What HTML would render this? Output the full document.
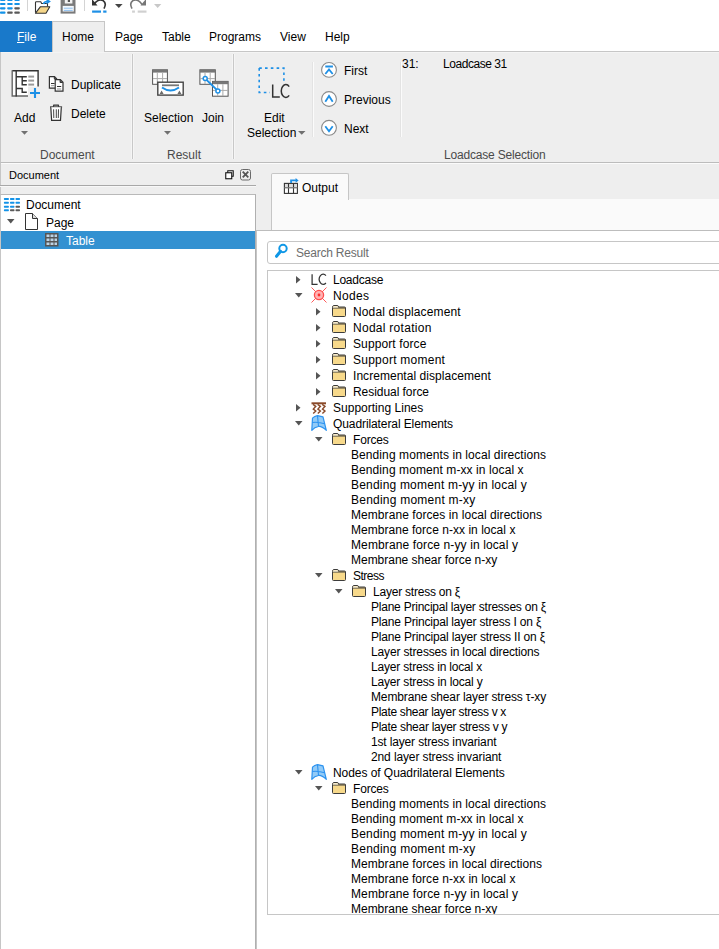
<!DOCTYPE html>
<html><head><meta charset="utf-8">
<style>
*{margin:0;padding:0;box-sizing:border-box}
html,body{width:719px;height:949px;overflow:hidden;background:#fff;font-family:"Liberation Sans",sans-serif;font-size:12px;color:#000}
.a{position:absolute}
.t{position:absolute;white-space:nowrap;line-height:16px;height:16px}
svg{position:absolute;overflow:visible}
.lc{position:absolute;font-size:15px;line-height:16px;color:#333;transform:scaleX(0.95)}
.ic{position:absolute}
</style></head><body>
<!-- QAT icons -->
<svg style="left:0;top:0" width="20" height="14"><rect x="0" y="-1.3" width="5.5" height="2.2" rx="0.8" fill="#1493e8"/><rect x="7.2" y="-1.3" width="5.5" height="2.2" rx="0.8" fill="#1493e8"/><rect x="14.3" y="-1.3" width="5.5" height="2.2" rx="0.8" fill="#1493e8"/><rect x="0" y="2.9" width="5.5" height="2.2" rx="0.8" fill="#1493e8"/><rect x="7.2" y="2.9" width="5.5" height="2.2" rx="0.8" fill="#1493e8"/><rect x="14.3" y="2.9" width="5.5" height="2.2" rx="0.8" fill="#1493e8"/><rect x="0" y="7.2" width="5.5" height="2.2" rx="0.8" fill="#1493e8"/><rect x="7.2" y="7.2" width="5.5" height="2.2" rx="0.8" fill="#1493e8"/><rect x="14.3" y="7.2" width="5.5" height="2.2" rx="0.8" fill="#5a5a5a"/><rect x="0" y="11.5" width="5.5" height="2.2" rx="0.8" fill="#1493e8"/><rect x="7.2" y="11.5" width="5.5" height="2.2" rx="0.8" fill="#5a5a5a"/><rect x="14.3" y="11.5" width="5.5" height="2.2" rx="0.8" fill="#5a5a5a"/></svg>
<div class="a" style="left:27px;top:0;width:1px;height:11px;background:#d4d4d4"></div>
<svg style="left:30px;top:0" width="24" height="16">
 <path d="M5.5 12.5 L5.5 2.5 Q5.5 1.7 6.3 1.7 L10.8 1.7 L11.6 3.5 L17.5 3.5 L17.5 6.5" fill="none" stroke="#333" stroke-width="1.1"/>
 <path d="M5.5 13.2 L10.5 6.7 L19.8 6.7 L16 13.2 Z" fill="#f5d68a" stroke="#333" stroke-width="1.1" stroke-linejoin="round"/>
 <path d="M13.5 4 Q14 1.5 17.5 1.5" fill="none" stroke="#1e90e6" stroke-width="1.6"/>
 <path d="M16.5 -1.5 L20.9 1.5 L16.5 4.2 Z" fill="#1e90e6"/>
</svg>
<svg style="left:60px;top:0" width="16" height="14">
 <path d="M0.6 -1 L0.6 13.6 L15.5 13.6 L15.5 -1 Z" fill="#7a7a7a"/>
 <rect x="4.8" y="-1" width="7.6" height="4.5" fill="#f2f2f2"/><rect x="7.8" y="-1" width="2.2" height="3" fill="#555"/>
 <rect x="2.7" y="5.9" width="11.1" height="5.6" fill="#f4f8fc"/>
 <line x1="3.8" y1="8.2" x2="12.7" y2="8.2" stroke="#8ec0f0" stroke-width="1"/><line x1="3.8" y1="10.4" x2="12.7" y2="10.4" stroke="#8ec0f0" stroke-width="1"/>
</svg>
<div class="a" style="left:84px;top:0;width:1px;height:11px;background:#d4d4d4"></div>
<svg style="left:86px;top:0" width="24" height="14">
 <path d="M8 4.5 Q12 -1.5 17 0.5 Q21 3 18 8.6" fill="none" stroke="#333" stroke-width="1.6"/>
 <path d="M6 -1 L6 5.5 L11.5 5.5 Z" fill="#333"/>
 <line x1="6.1" y1="11.6" x2="15" y2="11.6" stroke="#1e90e6" stroke-width="2.2"/><line x1="17.2" y1="11.6" x2="20.5" y2="11.6" stroke="#1e90e6" stroke-width="2.2"/>
</svg>
<svg style="left:115px;top:4px" width="8" height="5"><path d="M0 0 L7.6 0 L3.8 3.9 Z" fill="#444"/></svg>
<svg style="left:126px;top:0" width="24" height="14">
 <path d="M16 4.5 Q12 -1.5 7 0.5 Q3 3 6 8.6" fill="none" stroke="#777" stroke-width="1.6"/>
 <path d="M20 -1 L20 5.5 L14.5 5.5 Z" fill="#777"/>
 <line x1="6.1" y1="11.6" x2="8.9" y2="11.6" stroke="#d0d0d0" stroke-width="2.2"/><line x1="11.7" y1="11.6" x2="20.5" y2="11.6" stroke="#d0d0d0" stroke-width="2.2"/>
</svg>
<svg style="left:154px;top:4px" width="8" height="5"><path d="M0 0 L7.3 0 L3.65 3.9 Z" fill="#c8c8c8"/></svg>
<!-- tabs -->
<div class="a" style="left:0;top:21px;width:52px;height:31px;background:#1979ca;z-index:2"></div>
<div class="t" style="left:17px;top:29px;color:#fff;z-index:3"><u>F</u>ile</div>
<div class="a" style="left:52px;top:21px;width:53px;height:31px;background:#eeeeee;border:1px solid #c6c6c6;border-bottom:none;z-index:2"></div>
<div class="t" style="left:62px;top:29px;z-index:3">Home</div>
<div class="t" style="left:115px;top:29px">Page</div>
<div class="t" style="left:162px;top:29px">Table</div>
<div class="t" style="left:209px;top:29px">Programs</div>
<div class="t" style="left:280px;top:29px">View</div>
<div class="t" style="left:325px;top:29px">Help</div>
<!-- ribbon body -->
<div class="a" style="left:0;top:51px;width:719px;height:112px;background:#eeeeee;border-top:1px solid #c6c6c6;border-bottom:1px solid #bcbcbc;border-left:1px solid #c6c6c6"></div>
<div class="a" style="left:1px;top:52px;width:718px;height:1px;background:#f4f4f4;z-index:1"></div>
<!-- Document group -->
<svg style="left:8px;top:66px" width="36" height="36">
 <path d="M4.2 4.7 L30.1 4.7 L30.1 20.5 L20 20.5 L20 30 L4.2 30 Z" fill="#fff"/>
 <g fill="none" stroke="#333" stroke-width="1.4">
 <path d="M4.2 4.7 L30.1 4.7 L30.1 20.5" />
 <path d="M4.2 4.2 L4.2 30 L20 30" stroke="#666"/>
 <line x1="8.2" y1="4.2" x2="8.2" y2="30.5"/>
 <path d="M8.2 10.8 L18.8 10.8 M14.2 10.8 L14.2 18.8 L18.8 18.8 M14.2 14.8 L18.8 14.8 M8.2 22.5 L14.2 22.5 L14.2 26.3 L18.8 26.3"/>
 </g>
 <g fill="#9a9a9a"><rect x="20.3" y="9.6" width="5.8" height="2"/><rect x="20.3" y="13.6" width="5.8" height="2"/><rect x="20.3" y="17.6" width="5.8" height="2"/></g>
 <path d="M27 22 L27 32 M22 27 L32 27" stroke="#1e90e6" stroke-width="2.1"/>
</svg>
<div class="t" style="left:14px;top:110px">Add</div>
<svg style="left:21px;top:131px" width="8" height="5"><path d="M0 0 L7 0 L3.5 3.8 Z" fill="#707070"/></svg>
<svg style="left:44px;top:72px" width="24" height="24">
 <g stroke="#333" stroke-width="1.2" fill="#fff">
 <path d="M5.4 4.6 L10.5 4.6 L12.6 6.7 L12.6 16.2 L5.4 16.2 Z"/>
 <path d="M11.2 7.6 L16.3 7.6 L19 10.3 L19 19.2 L11.2 19.2 Z"/>
 </g>
 <path d="M10.3 4.8 L10.3 6.9 L12.4 6.9 M16.1 7.8 L16.1 10.5 L18.8 10.5" fill="#555" stroke="#333" stroke-width="1"/>
 <line x1="7" y1="11.5" x2="10.6" y2="11.5" stroke="#333" stroke-width="1"/><line x1="7" y1="13.7" x2="10.6" y2="13.7" stroke="#999" stroke-width="1"/>
 <line x1="13" y1="14.5" x2="17.2" y2="14.5" stroke="#333" stroke-width="1"/><line x1="13" y1="17" x2="17.2" y2="17" stroke="#999" stroke-width="1"/>
</svg>
<div class="t" style="left:71px;top:77px">Duplicate</div>
<svg style="left:44px;top:100px" width="24" height="24">
 <path d="M6 7 L18.1 7" stroke="#333" stroke-width="1.3"/>
 <path d="M9.3 6.8 L9.8 5.2 L14.3 5.2 L14.8 6.8" fill="none" stroke="#333" stroke-width="1.2"/>
 <path d="M6.8 7.2 L7.6 20.3 L16.5 20.3 L17.3 7.2" fill="#fff" stroke="#333" stroke-width="1.2"/>
 <path d="M9.6 9.3 L9.8 18 M12.3 9.3 L12.3 18 M14.5 9.3 L14.3 18" stroke="#333" stroke-width="0.9"/>
</svg>
<div class="t" style="left:71px;top:106px">Delete</div>
<div class="t" style="left:40px;top:147px;color:#4a4a4a">Document</div>
<div class="a" style="left:131px;top:54px;width:3px;height:105px;background:#f5f5f5"></div><div class="a" style="left:132px;top:54px;width:1px;height:105px;background:#c8c8c8"></div>
<!-- Result group -->
<svg style="left:148px;top:64px" width="84" height="36">
 <rect x="4.6" y="5.8" width="14.8" height="14.5" fill="#fff" stroke="#555" stroke-width="1"/>
 <rect x="4.6" y="5.8" width="14.8" height="2.8" fill="#777"/>
 <path d="M9.3 8.6 L9.3 20 M14.6 8.6 L14.6 20 M5 14.6 L19 14.6" stroke="#aaa" stroke-width="1"/>
 <rect x="9.8" y="18.2" width="25.4" height="12.9" fill="#fff" stroke="#444" stroke-width="1.4"/>
 <rect x="14" y="20.4" width="17" height="1.8" fill="#777"/>
 <path d="M14 23.5 Q22.5 29.5 31 23.5" fill="none" stroke="#1e90e6" stroke-width="2"/>
 <path d="M11.6 30 L13.6 26.4 L15.6 30 Z M29.4 30 L31.4 26.4 L33.4 30 Z" fill="#6a6a6a"/>
 <!-- join -->
 <rect x="51.9" y="5.8" width="15.4" height="14.5" fill="#fff" stroke="#555" stroke-width="1"/>
 <rect x="51.9" y="5.8" width="15.4" height="2.8" fill="#777"/>
 <path d="M57 8.6 L57 20 M62.2 8.6 L62.2 20 M52 14.6 L67 14.6" stroke="#aaa" stroke-width="1"/>
 <rect x="64.5" y="17.4" width="15.6" height="14.8" fill="#fff" stroke="#555" stroke-width="1"/>
 <rect x="64.5" y="17.4" width="15.6" height="2.8" fill="#777"/>
 <path d="M69.7 20.2 L69.7 32 M74.9 20.2 L74.9 32 M65 26.4 L80 26.4" stroke="#aaa" stroke-width="1"/>
 <line x1="57.2" y1="14.6" x2="69.9" y2="26.9" stroke="#1e90e6" stroke-width="2"/>
 <circle cx="57.2" cy="14.6" r="2" fill="#fff" stroke="#1e90e6" stroke-width="1.5"/>
 <circle cx="69.9" cy="26.9" r="2" fill="#fff" stroke="#1e90e6" stroke-width="1.5"/>
</svg>
<div class="t" style="left:144px;top:110px">Selection</div>
<svg style="left:164px;top:131px" width="8" height="5"><path d="M0 0 L7 0 L3.5 3.8 Z" fill="#707070"/></svg>
<div class="t" style="left:202px;top:110px">Join</div>
<div class="t" style="left:167px;top:147px;color:#4a4a4a">Result</div>
<div class="a" style="left:232px;top:54px;width:3px;height:105px;background:#f5f5f5"></div><div class="a" style="left:233px;top:54px;width:1px;height:105px;background:#c8c8c8"></div>
<!-- Edit selection -->
<svg style="left:254px;top:62px" width="40" height="40">
 <path d="M5.2 6.1 L29.9 6.1 L29.9 20 M5.2 6.1 L5.2 30.5 L16 30.5" fill="none" stroke="#1e90e6" stroke-width="1.6" stroke-dasharray="2.6 3.2"/>
 <path d="M18.7 22.4 L18.7 34.9 L25.8 34.9" fill="none" stroke="#333" stroke-width="1.5"/>
 <path d="M35.2 24.6 A4.6 6.4 0 1 0 35.2 33.4" fill="none" stroke="#333" stroke-width="1.5"/>
</svg>
<div class="t" style="left:264px;top:110px">Edit</div>
<div class="t" style="left:247px;top:125px">Selection</div>
<svg style="left:298px;top:131px" width="8" height="5"><path d="M0 0 L7.5 0 L3.75 3.8 Z" fill="#707070"/></svg>
<div class="a" style="left:312px;top:62px;width:1px;height:75px;background:#e3e3e3"></div><div class="a" style="left:313px;top:62px;width:1px;height:75px;background:#fbfbfb"></div>
<svg style="left:318px;top:58px" width="24" height="82">
 <g fill="#fff" stroke="#8a8a8a" stroke-width="1.1">
 <circle cx="11" cy="11.9" r="7.4"/><circle cx="11" cy="41" r="7.4"/><circle cx="11" cy="69.8" r="7.4"/>
 </g>
 <g fill="none" stroke="#1e90e6" stroke-width="1.8">
 <path d="M7.3 8.5 L14.9 8.5 M7.3 16 L11 11.4 L14.7 16"/>
 <path d="M7.3 43.7 L11 37.9 L14.7 43.7"/>
 <path d="M7.3 68.2 L11 73.2 L14.7 68.2"/>
 </g>
</svg>
<div class="t" style="left:344px;top:63px">First</div>
<div class="t" style="left:344px;top:92px">Previous</div>
<div class="t" style="left:344px;top:121px">Next</div>
<div class="a" style="left:400px;top:62px;width:1px;height:75px;background:#e3e3e3"></div><div class="a" style="left:401px;top:62px;width:1px;height:75px;background:#fbfbfb"></div>
<div class="t" style="left:402px;top:56px">31:</div>
<div class="t" style="left:443px;top:56px;letter-spacing:-0.45px">Loadcase 31</div>
<div class="t" style="left:444px;top:147px;color:#4a4a4a;letter-spacing:-0.18px">Loadcase Selection</div>
<!-- lower area -->
<div class="a" style="left:0;top:163px;width:719px;height:786px;background:#eeeeee"></div>
<div class="a" style="left:0;top:163px;width:719px;height:1px;background:#fbfbfb"></div>
<div class="a" style="left:0;top:163px;width:1px;height:786px;background:#c6c6c6"></div>
<!-- left panel -->
<div class="t" style="left:9px;top:167px;font-size:11px">Document</div>
<svg style="left:220px;top:164px" width="36" height="22">
 <rect x="7.75" y="6.75" width="5.5" height="5.5" fill="none" stroke="#111" stroke-width="1"/>
 <rect x="5.75" y="8.75" width="6" height="6" fill="#fff" stroke="#111" stroke-width="1.1"/>
 <rect x="20.5" y="5.5" width="10" height="10.5" rx="2" fill="none" stroke="#6a6a6a" stroke-width="1"/>
 <path d="M22.7 7.7 L28.3 13.3 M28.3 7.7 L22.7 13.3" stroke="#555" stroke-width="1.8"/>
</svg>
<div class="a" style="left:0;top:185px;width:256px;height:1px;background:#a8a8a8"></div>
<div class="a" style="left:0;top:186px;width:256px;height:1px;background:#f8f8f8"></div>
<div class="a" style="left:0;top:194px;width:256px;height:755px;background:#fff;border-top:1px solid #b9b9b9;border-left:1px solid #c6c6c6;border-right:1px solid #b0b0b0"></div>
<svg style="left:0;top:0" width="24" height="214"><rect x="3.9" y="197.9" width="5.0" height="2" rx="0.7" fill="#1493e8"/><rect x="10.0" y="197.9" width="4.5" height="2" rx="0.7" fill="#1493e8"/><rect x="15.5" y="197.9" width="4.5" height="2" rx="0.7" fill="#1493e8"/><rect x="3.9" y="201.8" width="5.0" height="2" rx="0.7" fill="#1493e8"/><rect x="10.0" y="201.8" width="4.5" height="2" rx="0.7" fill="#1493e8"/><rect x="15.5" y="201.8" width="4.5" height="2" rx="0.7" fill="#1493e8"/><rect x="3.9" y="205.7" width="5.0" height="2" rx="0.7" fill="#1493e8"/><rect x="10.0" y="205.7" width="4.5" height="2" rx="0.7" fill="#1493e8"/><rect x="15.5" y="205.7" width="4.5" height="2" rx="0.7" fill="#5a5a5a"/><rect x="3.9" y="209.2" width="5.0" height="2" rx="0.7" fill="#1493e8"/><rect x="10.0" y="209.2" width="4.5" height="2" rx="0.7" fill="#5a5a5a"/><rect x="15.5" y="209.2" width="4.5" height="2" rx="0.7" fill="#5a5a5a"/></svg>
<div class="t" style="left:26px;top:197px;color:#000">Document</div>
<svg style="left:7px;top:219px" width="8" height="6"><path d="M0 0 L7.5 0 L3.75 4.5 Z" fill="#555"/></svg>
<svg style="left:25px;top:213px" width="14" height="18">
 <path d="M0.5 0.5 L7.5 0.5 L12.5 5.5 L12.5 16.5 L0.5 16.5 Z" fill="#fff" stroke="#333"/>
 <path d="M7.5 0.5 L7.5 5.5 L12.5 5.5" fill="#ddd" stroke="#333"/>
</svg>
<div class="t" style="left:46px;top:215px;color:#000">Page</div>
<div class="a" style="left:1px;top:231px;width:254px;height:18px;background:#3391d1"></div>
<svg style="left:45px;top:233px" width="14" height="14">
 <rect x="0" y="0" width="13.5" height="13.5" fill="#555"/>
 <g fill="#bcd3e6"><rect x="1.5" y="1.5" width="3" height="2.5"/><rect x="5.5" y="1.5" width="3" height="2.5"/><rect x="9.5" y="1.5" width="2.5" height="2.5"/>
 <rect x="1.5" y="5.5" width="3" height="2.5"/><rect x="5.5" y="5.5" width="3" height="2.5"/><rect x="9.5" y="5.5" width="2.5" height="2.5"/>
 <rect x="1.5" y="9.5" width="3" height="2.5"/><rect x="5.5" y="9.5" width="3" height="2.5"/><rect x="9.5" y="9.5" width="2.5" height="2.5"/></g>
</svg>
<div class="t" style="left:66px;top:233px;color:#fff">Table</div>
<!-- right panel -->
<div class="a" style="left:271px;top:173px;width:78px;height:27px;background:#fafafa;border:1px solid #c6c6c6;border-bottom:none;border-radius:2px 2px 0 0;z-index:2"></div>
<div class="a" style="left:348px;top:199px;width:371px;height:1px;background:#c6c6c6"></div>
<div class="a" style="left:271px;top:199px;width:448px;height:32px;background:#fafafa;border-left:1px solid #c6c6c6;z-index:1"></div>
<div class="a" style="left:272px;top:199px;width:76px;height:2px;background:#fafafa;z-index:3"></div>
<div class="a" style="left:256px;top:230px;width:463px;height:1px;background:#bdbdbd;z-index:3"></div>
<svg style="left:280px;top:174px;z-index:4" width="20" height="22">
 <rect x="4.4" y="9.4" width="13" height="10" fill="#fff" stroke="#333" stroke-width="1.1"/>
 <rect x="5" y="10" width="12" height="3.5" fill="#dedede"/>
 <line x1="8.5" y1="9.4" x2="8.5" y2="19.4" stroke="#333" stroke-width="1.1"/><line x1="13.5" y1="9.4" x2="13.5" y2="19.4" stroke="#333" stroke-width="1.1"/>
 <line x1="4.4" y1="13.75" x2="17.4" y2="13.75" stroke="#777" stroke-width="1.3"/>
 <path d="M11.1 9 L11.1 6.4 L16 6.4" fill="none" stroke="#1e90e6" stroke-width="1.9"/>
 <path d="M15.6 4 L18.6 6.4 L15.6 8.8 Z" fill="#1e90e6"/>
</svg>
<div class="t" style="left:302px;top:180px;z-index:4;color:#000">Output</div>
<div class="a" style="left:256px;top:231px;width:463px;height:718px;background:#fff;border-left:1px solid #c6c6c6"></div>
<div class="a" style="left:267px;top:241px;width:460px;height:23px;background:#fff;border:1px solid #c6c6c6;border-radius:3px"></div>
<svg style="left:274px;top:244px" width="15" height="15">
 <circle cx="9" cy="4.5" r="3.7" fill="none" stroke="#0f97e6" stroke-width="2"/>
 <line x1="6.6" y1="7.3" x2="2.5" y2="12.3" stroke="#0f97e6" stroke-width="3" stroke-linecap="round"/>
</svg>
<div class="t" style="left:296px;top:245px;color:#6d6d6d;letter-spacing:-0.22px">Search Result</div>
<div class="a" style="left:267px;top:270px;width:460px;height:645px;background:#fff;border:1px solid #c6c6c6;overflow:hidden" id="tree">
<svg class="ic" style="left:43px;top:0px" width="17" height="17"><path d="M1.1 3.2 L1.1 13.4 L6.6 13.4" fill="none" stroke="#333" stroke-width="1.25"/><path d="M14.9 4.6 A3.9 5.1 0 1 0 14.9 12" fill="none" stroke="#333" stroke-width="1.25"/></svg>
<svg class="ic" style="left:28px;top:5px" width="6" height="8"><path d="M0 0 L4.5 3.75 L0 7.5 Z" fill="#555"/></svg>
<div class="t" style="left:65px;top:1px;letter-spacing:-0.243px">Loadcase</div>
<svg class="ic" style="left:43px;top:16px" width="17" height="17"><path d="M0.5 0.5 L15.5 15.5 M15.5 0.5 L0.5 15.5" stroke="#ff5a5a" stroke-width="1"/><circle cx="8" cy="8" r="4.6" fill="#ffb3b3" stroke="#ff4d4d" stroke-width="1.3"/><circle cx="8" cy="8" r="1.4" fill="#ff3030"/></svg>
<svg class="ic" style="left:27px;top:22px" width="8" height="6"><path d="M0 0 L7.5 0 L3.75 4.5 Z" fill="#555"/></svg>
<div class="t" style="left:65px;top:17px;letter-spacing:0.325px">Nodes</div>
<svg class="ic" style="left:63px;top:32px" width="17" height="17"><path d="M1.5 4.5 Q1.5 2.5 3 2.5 L6 2.5 Q7.5 2.5 7.5 4 L13.5 4 Q14.5 4 14.5 5 L14.5 12.5 Q14.5 13.5 13.5 13.5 L2.5 13.5 Q1.5 13.5 1.5 12.5 Z" fill="#f7d98b" stroke="#3c3c3c" stroke-width="1"/><path d="M1.5 5 L14.5 5" stroke="#3c3c3c" stroke-width="1"/><path d="M2 3.5 L7 3.5 L7 4.5 L2 4.5Z" fill="#fff"/></svg>
<svg class="ic" style="left:48px;top:37px" width="6" height="8"><path d="M0 0 L4.5 3.75 L0 7.5 Z" fill="#555"/></svg>
<div class="t" style="left:85px;top:33px;letter-spacing:0.129px">Nodal displacement</div>
<svg class="ic" style="left:63px;top:48px" width="17" height="17"><path d="M1.5 4.5 Q1.5 2.5 3 2.5 L6 2.5 Q7.5 2.5 7.5 4 L13.5 4 Q14.5 4 14.5 5 L14.5 12.5 Q14.5 13.5 13.5 13.5 L2.5 13.5 Q1.5 13.5 1.5 12.5 Z" fill="#f7d98b" stroke="#3c3c3c" stroke-width="1"/><path d="M1.5 5 L14.5 5" stroke="#3c3c3c" stroke-width="1"/><path d="M2 3.5 L7 3.5 L7 4.5 L2 4.5Z" fill="#fff"/></svg>
<svg class="ic" style="left:48px;top:53px" width="6" height="8"><path d="M0 0 L4.5 3.75 L0 7.5 Z" fill="#555"/></svg>
<div class="t" style="left:85px;top:49px;letter-spacing:0.277px">Nodal rotation</div>
<svg class="ic" style="left:63px;top:64px" width="17" height="17"><path d="M1.5 4.5 Q1.5 2.5 3 2.5 L6 2.5 Q7.5 2.5 7.5 4 L13.5 4 Q14.5 4 14.5 5 L14.5 12.5 Q14.5 13.5 13.5 13.5 L2.5 13.5 Q1.5 13.5 1.5 12.5 Z" fill="#f7d98b" stroke="#3c3c3c" stroke-width="1"/><path d="M1.5 5 L14.5 5" stroke="#3c3c3c" stroke-width="1"/><path d="M2 3.5 L7 3.5 L7 4.5 L2 4.5Z" fill="#fff"/></svg>
<svg class="ic" style="left:48px;top:69px" width="6" height="8"><path d="M0 0 L4.5 3.75 L0 7.5 Z" fill="#555"/></svg>
<div class="t" style="left:85px;top:65px;letter-spacing:0.108px">Support force</div>
<svg class="ic" style="left:63px;top:80px" width="17" height="17"><path d="M1.5 4.5 Q1.5 2.5 3 2.5 L6 2.5 Q7.5 2.5 7.5 4 L13.5 4 Q14.5 4 14.5 5 L14.5 12.5 Q14.5 13.5 13.5 13.5 L2.5 13.5 Q1.5 13.5 1.5 12.5 Z" fill="#f7d98b" stroke="#3c3c3c" stroke-width="1"/><path d="M1.5 5 L14.5 5" stroke="#3c3c3c" stroke-width="1"/><path d="M2 3.5 L7 3.5 L7 4.5 L2 4.5Z" fill="#fff"/></svg>
<svg class="ic" style="left:48px;top:85px" width="6" height="8"><path d="M0 0 L4.5 3.75 L0 7.5 Z" fill="#555"/></svg>
<div class="t" style="left:85px;top:81px;letter-spacing:0.246px">Support moment</div>
<svg class="ic" style="left:63px;top:96px" width="17" height="17"><path d="M1.5 4.5 Q1.5 2.5 3 2.5 L6 2.5 Q7.5 2.5 7.5 4 L13.5 4 Q14.5 4 14.5 5 L14.5 12.5 Q14.5 13.5 13.5 13.5 L2.5 13.5 Q1.5 13.5 1.5 12.5 Z" fill="#f7d98b" stroke="#3c3c3c" stroke-width="1"/><path d="M1.5 5 L14.5 5" stroke="#3c3c3c" stroke-width="1"/><path d="M2 3.5 L7 3.5 L7 4.5 L2 4.5Z" fill="#fff"/></svg>
<svg class="ic" style="left:48px;top:101px" width="6" height="8"><path d="M0 0 L4.5 3.75 L0 7.5 Z" fill="#555"/></svg>
<div class="t" style="left:85px;top:97px;letter-spacing:0.043px">Incremental displacement</div>
<svg class="ic" style="left:63px;top:112px" width="17" height="17"><path d="M1.5 4.5 Q1.5 2.5 3 2.5 L6 2.5 Q7.5 2.5 7.5 4 L13.5 4 Q14.5 4 14.5 5 L14.5 12.5 Q14.5 13.5 13.5 13.5 L2.5 13.5 Q1.5 13.5 1.5 12.5 Z" fill="#f7d98b" stroke="#3c3c3c" stroke-width="1"/><path d="M1.5 5 L14.5 5" stroke="#3c3c3c" stroke-width="1"/><path d="M2 3.5 L7 3.5 L7 4.5 L2 4.5Z" fill="#fff"/></svg>
<svg class="ic" style="left:48px;top:117px" width="6" height="8"><path d="M0 0 L4.5 3.75 L0 7.5 Z" fill="#555"/></svg>
<div class="t" style="left:85px;top:113px;letter-spacing:-0.054px">Residual force</div>
<svg class="ic" style="left:43px;top:128px" width="17" height="17"><line x1="0.5" y1="4.3" x2="15" y2="4.3" stroke="#8a4a2a" stroke-width="2"/><path d="M2 5.4 L4.8 7.3 L2.3 10.1 L4.8 12 L2.2 14.6 M6.6 5.4 L9.4 7.3 L6.9 10.1 L9.4 12 L6.8 14.6 M11.2 5.4 L14 7.3 L11.5 10.1 L14 12 L11.4 14.6" fill="none" stroke="#8a4a2a" stroke-width="1.4"/></svg>
<svg class="ic" style="left:28px;top:133px" width="6" height="8"><path d="M0 0 L4.5 3.75 L0 7.5 Z" fill="#555"/></svg>
<div class="t" style="left:65px;top:129px;letter-spacing:0.013px">Supporting Lines</div>
<svg class="ic" style="left:43px;top:144px" width="17" height="17"><path d="M0.8 15.3 L1.5 3.2 Q3.5 1 6.5 0.6 L12 1.8 L15.3 15.3 Q10.5 11 7.5 11.5 Q3.5 12 0.8 15.3 Z" fill="#93cbf7" stroke="#2d93f0" stroke-width="1.2" stroke-linejoin="round"/><path d="M6.5 0.6 L7.5 11.5 M1.2 7.5 Q7 6.5 13.6 8.8" fill="none" stroke="#2d93f0" stroke-width="1.1"/></svg>
<svg class="ic" style="left:27px;top:150px" width="8" height="6"><path d="M0 0 L7.5 0 L3.75 4.5 Z" fill="#555"/></svg>
<div class="t" style="left:65px;top:145px;letter-spacing:-0.095px">Quadrilateral Elements</div>
<svg class="ic" style="left:63px;top:160px" width="17" height="17"><path d="M1.5 4.5 Q1.5 2.5 3 2.5 L6 2.5 Q7.5 2.5 7.5 4 L13.5 4 Q14.5 4 14.5 5 L14.5 12.5 Q14.5 13.5 13.5 13.5 L2.5 13.5 Q1.5 13.5 1.5 12.5 Z" fill="#f7d98b" stroke="#3c3c3c" stroke-width="1"/><path d="M1.5 5 L14.5 5" stroke="#3c3c3c" stroke-width="1"/><path d="M2 3.5 L7 3.5 L7 4.5 L2 4.5Z" fill="#fff"/></svg>
<svg class="ic" style="left:47px;top:166px" width="8" height="6"><path d="M0 0 L7.5 0 L3.75 4.5 Z" fill="#555"/></svg>
<div class="t" style="left:85px;top:161px;letter-spacing:-0.160px">Forces</div>
<div class="t" style="left:83px;top:176px;letter-spacing:0.085px">Bending moments in local directions</div>
<div class="t" style="left:83px;top:191px;letter-spacing:0.086px">Bending moment m-xx in local x</div>
<div class="t" style="left:83px;top:206px;letter-spacing:0.193px">Bending moment m-yy in local y</div>
<div class="t" style="left:83px;top:221px;letter-spacing:0.233px">Bending moment m-xy</div>
<div class="t" style="left:83px;top:236px;letter-spacing:0.068px">Membrane forces in local directions</div>
<div class="t" style="left:83px;top:251px;letter-spacing:0.034px">Membrane force n-xx in local x</div>
<div class="t" style="left:83px;top:266px;letter-spacing:0.121px">Membrane force n-yy in local y</div>
<div class="t" style="left:83px;top:281px;letter-spacing:-0.021px">Membrane shear force n-xy</div>
<svg class="ic" style="left:63px;top:296px" width="17" height="17"><path d="M1.5 4.5 Q1.5 2.5 3 2.5 L6 2.5 Q7.5 2.5 7.5 4 L13.5 4 Q14.5 4 14.5 5 L14.5 12.5 Q14.5 13.5 13.5 13.5 L2.5 13.5 Q1.5 13.5 1.5 12.5 Z" fill="#f7d98b" stroke="#3c3c3c" stroke-width="1"/><path d="M1.5 5 L14.5 5" stroke="#3c3c3c" stroke-width="1"/><path d="M2 3.5 L7 3.5 L7 4.5 L2 4.5Z" fill="#fff"/></svg>
<svg class="ic" style="left:47px;top:302px" width="8" height="6"><path d="M0 0 L7.5 0 L3.75 4.5 Z" fill="#555"/></svg>
<div class="t" style="left:85px;top:297px;letter-spacing:-0.500px">Stress</div>
<svg class="ic" style="left:83px;top:312px" width="17" height="17"><path d="M1.5 4.5 Q1.5 2.5 3 2.5 L6 2.5 Q7.5 2.5 7.5 4 L13.5 4 Q14.5 4 14.5 5 L14.5 12.5 Q14.5 13.5 13.5 13.5 L2.5 13.5 Q1.5 13.5 1.5 12.5 Z" fill="#f7d98b" stroke="#3c3c3c" stroke-width="1"/><path d="M1.5 5 L14.5 5" stroke="#3c3c3c" stroke-width="1"/><path d="M2 3.5 L7 3.5 L7 4.5 L2 4.5Z" fill="#fff"/></svg>
<svg class="ic" style="left:67px;top:318px" width="8" height="6"><path d="M0 0 L7.5 0 L3.75 4.5 Z" fill="#555"/></svg>
<div class="t" style="left:105px;top:313px;letter-spacing:-0.219px">Layer stress on ξ</div>
<div class="t" style="left:103px;top:328px;letter-spacing:-0.226px">Plane Principal layer stresses on ξ</div>
<div class="t" style="left:103px;top:343px;letter-spacing:-0.191px">Plane Principal layer stress I on ξ</div>
<div class="t" style="left:103px;top:358px;letter-spacing:-0.171px">Plane Principal layer stress II on ξ</div>
<div class="t" style="left:103px;top:373px;letter-spacing:-0.148px">Layer stresses in local directions</div>
<div class="t" style="left:103px;top:388px;letter-spacing:-0.191px">Layer stress in local x</div>
<div class="t" style="left:103px;top:403px;letter-spacing:-0.168px">Layer stress in local y</div>
<div class="t" style="left:103px;top:418px;letter-spacing:-0.139px">Membrane shear layer stress τ-xy</div>
<div class="t" style="left:103px;top:433px;letter-spacing:-0.322px">Plate shear layer stress v x</div>
<div class="t" style="left:103px;top:448px;letter-spacing:-0.281px">Plate shear layer stress v y</div>
<div class="t" style="left:103px;top:463px;letter-spacing:-0.156px">1st layer stress invariant</div>
<div class="t" style="left:103px;top:478px;letter-spacing:-0.120px">2nd layer stress invariant</div>
<svg class="ic" style="left:43px;top:493px" width="17" height="17"><path d="M0.8 15.3 L1.5 3.2 Q3.5 1 6.5 0.6 L12 1.8 L15.3 15.3 Q10.5 11 7.5 11.5 Q3.5 12 0.8 15.3 Z" fill="#93cbf7" stroke="#2d93f0" stroke-width="1.2" stroke-linejoin="round"/><path d="M6.5 0.6 L7.5 11.5 M1.2 7.5 Q7 6.5 13.6 8.8" fill="none" stroke="#2d93f0" stroke-width="1.1"/></svg>
<svg class="ic" style="left:27px;top:499px" width="8" height="6"><path d="M0 0 L7.5 0 L3.75 4.5 Z" fill="#555"/></svg>
<div class="t" style="left:65px;top:494px;letter-spacing:-0.057px">Nodes of Quadrilateral Elements</div>
<svg class="ic" style="left:63px;top:509px" width="17" height="17"><path d="M1.5 4.5 Q1.5 2.5 3 2.5 L6 2.5 Q7.5 2.5 7.5 4 L13.5 4 Q14.5 4 14.5 5 L14.5 12.5 Q14.5 13.5 13.5 13.5 L2.5 13.5 Q1.5 13.5 1.5 12.5 Z" fill="#f7d98b" stroke="#3c3c3c" stroke-width="1"/><path d="M1.5 5 L14.5 5" stroke="#3c3c3c" stroke-width="1"/><path d="M2 3.5 L7 3.5 L7 4.5 L2 4.5Z" fill="#fff"/></svg>
<svg class="ic" style="left:47px;top:515px" width="8" height="6"><path d="M0 0 L7.5 0 L3.75 4.5 Z" fill="#555"/></svg>
<div class="t" style="left:85px;top:510px;letter-spacing:-0.160px">Forces</div>
<div class="t" style="left:83px;top:525px;letter-spacing:0.085px">Bending moments in local directions</div>
<div class="t" style="left:83px;top:540px;letter-spacing:0.086px">Bending moment m-xx in local x</div>
<div class="t" style="left:83px;top:555px;letter-spacing:0.193px">Bending moment m-yy in local y</div>
<div class="t" style="left:83px;top:570px;letter-spacing:0.233px">Bending moment m-xy</div>
<div class="t" style="left:83px;top:585px;letter-spacing:0.068px">Membrane forces in local directions</div>
<div class="t" style="left:83px;top:600px;letter-spacing:0.034px">Membrane force n-xx in local x</div>
<div class="t" style="left:83px;top:615px;letter-spacing:0.121px">Membrane force n-yy in local y</div>
<div class="t" style="left:83px;top:630px;letter-spacing:-0.021px">Membrane shear force n-xy</div>
</div>
</body></html>
